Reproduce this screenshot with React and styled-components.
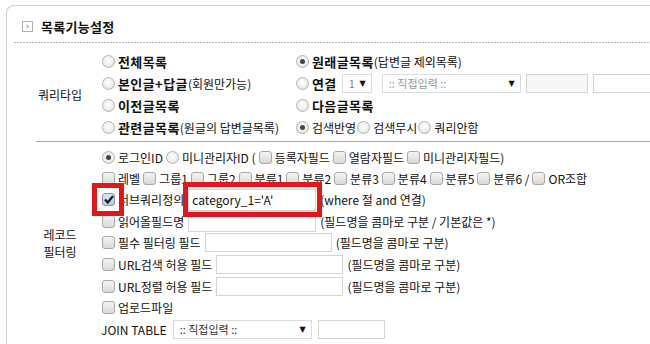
import React from "react";
import styled, { createGlobalStyle, css } from "styled-components";

const GlobalStyle = createGlobalStyle`
  html, body { margin: 0; padding: 0; background: #fff; overflow: hidden; }
  body {
    font-family: "Noto Sans CJK KR", "Noto Sans", "Liberation Sans", sans-serif;
    font-size: 12px;
    color: #111;
  }
`;

const Panel = styled.div`
  margin: 5px 0 0 6px;
  width: calc(100% - 6px);
  box-sizing: border-box;
  overflow: hidden;
  border: 1px solid #cfcfcf;
  border-right: none;
  border-radius: 8px 0 0 0;
`;

const Header = styled.div`
  margin-left: 7px;
  height: 37px;
  padding-left: 8px;
  display: flex;
  align-items: center;
  gap: 8px;
  padding-top: 3px;
  box-sizing: border-box;
  background-image: repeating-linear-gradient(to right, #b5b5b5 0 2px, transparent 2px 3px);
  background-size: 100% 1px;
  background-repeat: no-repeat;
  background-position: left bottom;
`;

const HeadIcon = styled.span`
  width: 9px;
  height: 9px;
  border: 1px solid #b0b0b0;
  display: inline-flex;
  align-items: center;
  justify-content: center;
  color: #666;
  font-size: 9px;
  line-height: 1;
  font-family: "DejaVu Sans", sans-serif;
`;

const Title = styled.span`
  font-weight: bold;
  font-size: 13px;
  letter-spacing: 0.3px;
`;

const Section = styled.div`
  display: flex;
  margin-left: 29px;
  padding: ${(p) => p.$pad};
  ${(p) => p.$line && css`border-bottom: 1px solid #a8a8a8;`}
`;

const Label = styled.div`
  width: 48px;
  flex: none;
  display: flex;
  align-items: center;
  justify-content: center;
  text-align: center;
  line-height: 17px;
`;

const QueryGrid = styled.div`
  padding-left: 18px;
  display: grid;
  grid-template-columns: 194px auto;
  grid-auto-rows: 22px;
`;

const Rows = styled.div`
  padding-left: 18px;
  display: flex;
  flex-direction: column;
`;

const Row = styled.div`
  display: flex;
  align-items: center;
  height: ${(p) => p.$h || 21}px;
  gap: ${(p) => (p.$gap === undefined ? 3 : p.$gap)}px;
  white-space: nowrap;
`;

const Cell = styled.div`
  display: flex;
  align-items: center;
  gap: ${(p) => (p.$gap === undefined ? 5 : p.$gap)}px;
  white-space: nowrap;
`;

const Opt = styled.span`
  display: inline-flex;
  align-items: center;
  gap: 3px;
  position: relative;
`;

const Strong = styled.b`
  font-size: 13px;
  font-weight: bold;
  letter-spacing: 0.4px;
`;

const Radio = styled.span`
  width: 11px;
  height: 11px;
  border-radius: 50%;
  border: 1px solid #b4b4b4;
  background: radial-gradient(circle at 50% 40%, #ffffff 0%, #ececec 60%, #d8d8d8 100%);
  display: inline-flex;
  align-items: center;
  justify-content: center;
  flex: none;
  &::after {
    content: "";
    width: 5px;
    height: 5px;
    border-radius: 50%;
    background: #444;
    display: ${(p) => (p.$checked ? "block" : "none")};
  }
`;

const Check = styled.span`
  width: 11px;
  height: 11px;
  border-radius: 3px;
  border: 1px solid ${(p) => (p.$checked ? "#7d95bd" : "#a8a8a8")};
  background: ${(p) =>
    p.$checked
      ? "linear-gradient(#dbe6f6, #b9cbe8)"
      : "linear-gradient(#f4f4f4, #d9d9d9)"};
  display: inline-flex;
  align-items: center;
  justify-content: center;
  flex: none;
  position: relative;
`;

const RedMark = styled.span`
  position: absolute;
  border: 5px solid #e3161b;
  pointer-events: none;
  z-index: 2;
  ${(p) => css`
    left: ${p.$l}px;
    top: ${p.$t}px;
    right: ${p.$r}px;
    bottom: ${p.$b}px;
  `}
`;

const FakeSelect = styled.span`
  display: inline-flex;
  align-items: center;
  justify-content: space-between;
  box-sizing: border-box;
  flex: none;
  width: ${(p) => p.$w}px;
  height: 19px;
  border: 1px solid #dcdcdc;
  padding: 0 5px 0 6px;
  color: ${(p) => p.$c || "#999"};
  font-size: 11px;
  background: #fff;
`;

const Arrow = styled.span`
  font-size: 8px;
  color: #111;
  font-family: "DejaVu Sans", sans-serif;
`;

const Field = styled.span`
  display: inline-flex;
  align-items: center;
  position: relative;
  box-sizing: border-box;
  flex: none;
  width: ${(p) => p.$w}px;
  height: ${(p) => p.$h || 20}px;
  border: 1px solid #d4d4d4;
  background: ${(p) => p.$bg || "#fff"};
  padding-left: 3px;
  font-size: 12px;
  color: #111;
`;

const Note = styled.span`
  font-size: 12px;
`;

export default function App() {
  return (
    <>
      <GlobalStyle />
      <Panel>
        <Header>
          <HeadIcon>›</HeadIcon>
          <Title>목록기능설정</Title>
        </Header>

        <Section $line $pad="7px 0 3px">
          <Label>쿼리타입</Label>
          <QueryGrid>
            <Cell>
              <Opt><Radio /><Strong>전체목록</Strong></Opt>
            </Cell>
            <Cell>
              <Opt><Radio $checked /><span><Strong>원래글목록</Strong>(답변글 제외목록)</span></Opt>
            </Cell>
            <Cell>
              <Opt><Radio /><span><Strong>본인글+답글</Strong>(회원만가능)</span></Opt>
            </Cell>
            <Cell $gap={5}>
              <Opt><Radio /><Strong>연결</Strong></Opt>
              <FakeSelect $w={30} $c="#888">1 <Arrow>▼</Arrow></FakeSelect>
              <FakeSelect $w={139} style={{ marginLeft: 5 }}>:: 직접입력 :: <Arrow>▼</Arrow></FakeSelect>
              <Field $w={62} $h={19} $bg="#f7f7f7" />
              <Field $w={80} $h={19} />
            </Cell>
            <Cell>
              <Opt><Radio /><Strong>이전글목록</Strong></Opt>
            </Cell>
            <Cell>
              <Opt><Radio /><Strong>다음글목록</Strong></Opt>
            </Cell>
            <Cell>
              <Opt><Radio /><span><Strong>관련글목록</Strong>(원글의 답변글목록)</span></Opt>
            </Cell>
            <Cell $gap={1}>
              <Opt><Radio $checked />검색반영</Opt>
              <Opt><Radio />검색무시</Opt>
              <Opt><Radio />쿼리안함</Opt>
            </Cell>
          </QueryGrid>
        </Section>

        <Section $pad="4px 0 9px">
          <Label>레코드<br />필터링</Label>
          <Rows>
            <Row $h={22}>
              <Opt><Radio $checked />로그인ID</Opt>
              <Opt><Radio />미니관리자ID (</Opt>
              <Opt><Check />등록자필드</Opt>
              <Opt><Check />열람자필드</Opt>
              <Opt><Check />미니관리자필드)</Opt>
            </Row>
            <Row>
              <Opt><Check />레벨</Opt>
              <Opt><Check />그룹1</Opt>
              <Opt><Check />그룹2</Opt>
              <Opt><Check />분류1</Opt>
              <Opt><Check />분류2</Opt>
              <Opt><Check />분류3</Opt>
              <Opt><Check />분류4</Opt>
              <Opt><Check />분류5</Opt>
              <Opt><Check />분류6 /</Opt>
              <Opt><Check />OR조합</Opt>
            </Row>
            <Row $h={21} $gap={4}>
              <Opt>
                <Check $checked>
                  <svg width="10" height="9" viewBox="0 0 10 9">
                    <path d="M1 4.5 L3.8 7.5 L9 1" fill="none" stroke="#1a1a1a" strokeWidth="2.2" />
                  </svg>
                  <RedMark $l={-11} $t={-11} $r={-10} $b={-11} />
                </Check>
                서브쿼리정의
              </Opt>
              <Field $w={128} $h={22}>
                category_1='A'
                <RedMark $l={-6} $t={-8} $r={-7} $b={-7} />
              </Field>
              <Note>(where 절 and 연결)</Note>
            </Row>
            <Row $h={22} $gap={4}>
              <Opt><Check />읽어올필드명</Opt>
              <Field $w={128} $h={21} />
              <Note>(필드명을 콤마로 구분 / 기본값은 *)</Note>
            </Row>
            <Row $gap={4}>
              <Opt><Check />필수 필터링 필드</Opt>
              <Field $w={127} $h={19} />
              <Note>(필드명을 콤마로 구분)</Note>
            </Row>
            <Row $h={23} $gap={4}>
              <Opt><Check />URL검색 허용 필드</Opt>
              <Field $w={127} $h={19} />
              <Note>(필드명을 콤마로 구분)</Note>
            </Row>
            <Row $gap={4}>
              <Opt><Check />URL정렬 허용 필드</Opt>
              <Field $w={127} $h={19} />
              <Note>(필드명을 콤마로 구분)</Note>
            </Row>
            <Row>
              <Opt><Check />업로드파일</Opt>
            </Row>
            <Row $h={22} $gap={6}>
              <span style={{ marginLeft: -1 }}>JOIN TABLE</span>
              <FakeSelect $w={139} $c="#333">:: 직접입력 :: <Arrow>▼</Arrow></FakeSelect>
              <Field $w={67} $h={19} />
            </Row>
          </Rows>
        </Section>
      </Panel>
    </>
  );
}
